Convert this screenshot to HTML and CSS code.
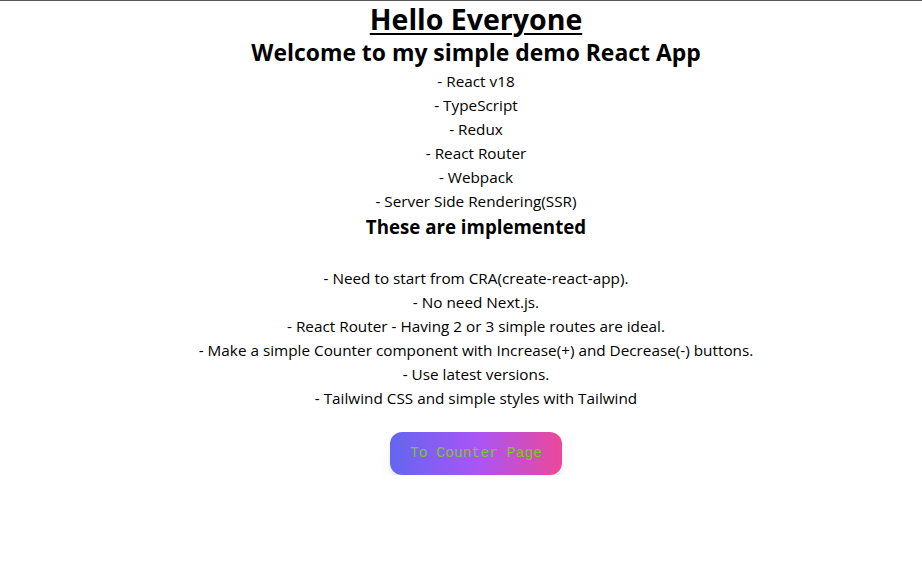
FILE: index.html
```html
<!DOCTYPE html>
<html lang="en">
<head>
<meta charset="utf-8">
<title>Demo React App</title>
<link rel="stylesheet" href="styles.css">
</head>
<body>
<div class="app">
  <h1 class="title">Hello Everyone</h1>
  <h2 class="subtitle">Welcome to my simple demo React App</h2>
  <ul class="list">
    <li>- React v18</li>
    <li>- TypeScript</li>
    <li>- Redux</li>
    <li>- React Router</li>
    <li>- Webpack</li>
    <li>- Server Side Rendering(SSR)</li>
  </ul>
  <h3 class="section">These are implemented</h3>
  <ul class="list spaced">
    <li>- Need to start from CRA(create-react-app).</li>
    <li>- No need Next.js.</li>
    <li>- React Router - Having 2 or 3 simple routes are ideal.</li>
    <li>- Make a simple Counter component with Increase(+) and Decrease(-) buttons.</li>
    <li>- Use latest versions.</li>
    <li>- Tailwind CSS and simple styles with Tailwind</li>
  </ul>
  <a class="btn" href="#">To Counter Page</a>
</div>
</body>
</html>
```
FILE: styles.css
```css
* { box-sizing: border-box; }
html, body { margin: 0; padding: 0; background: #fff; }
body {
  border-top: 1px solid #5a5a5a;
  font-family: "Open Sans", "Noto Sans", sans-serif;
  color: #000;
}
.app {
  display: flex;
  flex-direction: column;
  align-items: center;
  text-align: center;
  padding-left: 30px;
}
.title {
  margin: 0;
  padding-top: 1px;
  font-size: 28.5px;
  line-height: 35px;
  font-weight: 700;
  text-decoration: underline;
  text-decoration-thickness: 2px;
  text-underline-offset: 3px;
}
.subtitle {
  margin: 0;
  font-size: 22.9px;
  line-height: 32px;
  font-weight: 700;
}
.section {
  margin: 0;
  font-size: 18.7px;
  line-height: 28px;
  font-weight: 700;
}
.list {
  list-style: none;
  margin: 0;
  padding: 0;
  font-size: 15.3px;
  line-height: 24px;
}
.list.spaced { margin-top: 25px; }
.btn {
  margin-top: 22px;
  display: inline-block;
  padding: 10px 20px;
  border-radius: 12px;
  background: linear-gradient(to right, #6366f1, #a855f7, #ec4899);
  color: #7cc72a;
  font-family: "Liberation Mono", "DejaVu Sans Mono", monospace;
  font-size: 14.7px;
  line-height: 23px;
  text-decoration: none;
  box-shadow: 0 10px 15px -3px rgba(0,0,0,0.1), 0 4px 6px -4px rgba(0,0,0,0.1);
}
```
